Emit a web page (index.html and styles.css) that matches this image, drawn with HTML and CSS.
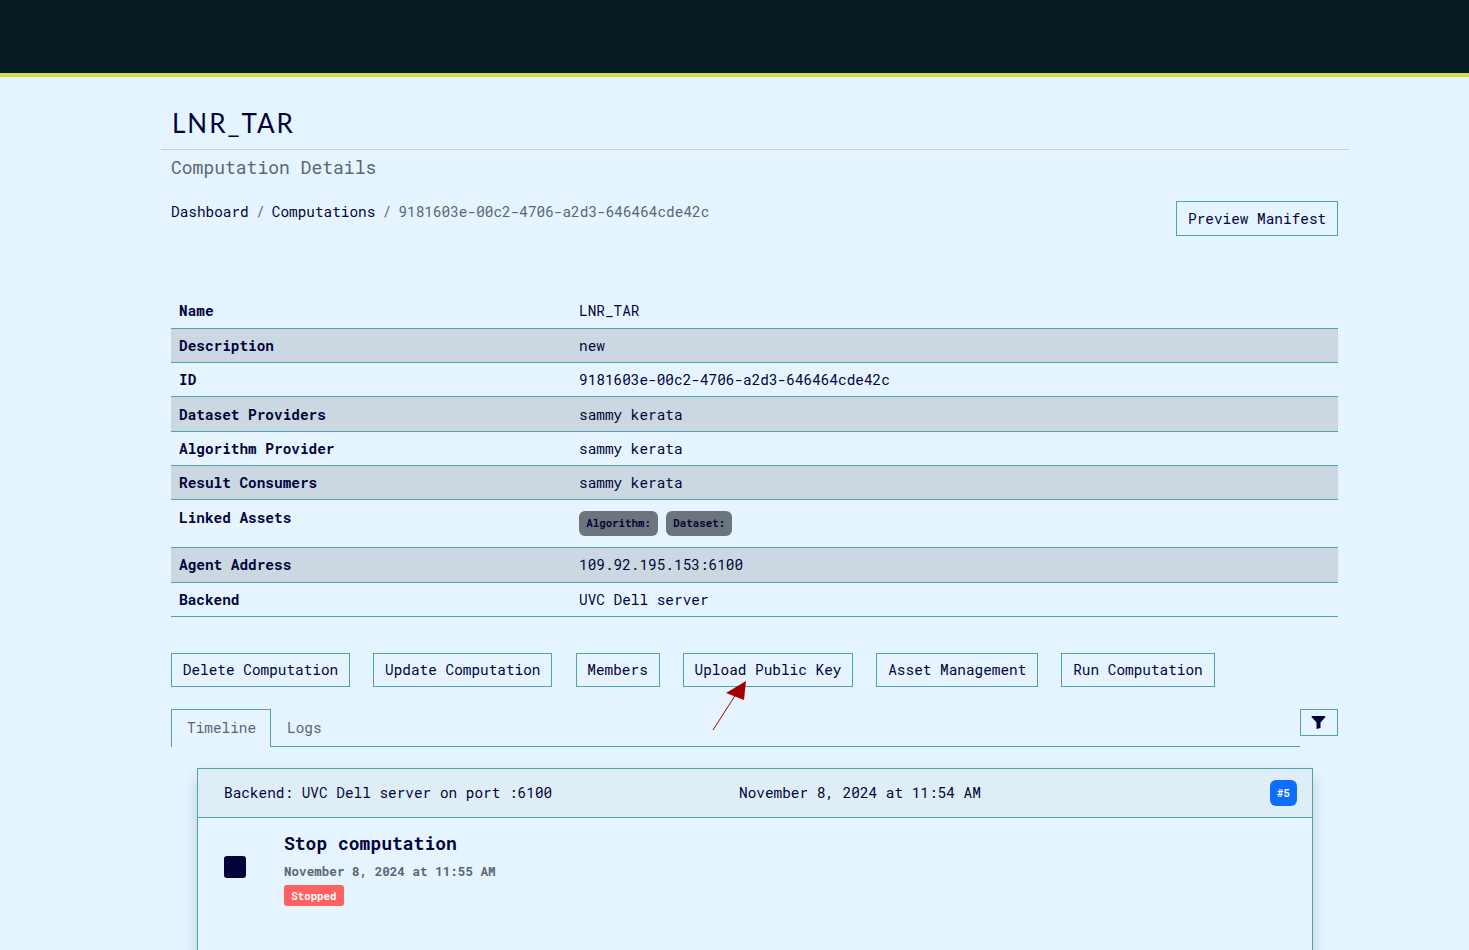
FILE: index.html
```html
<!DOCTYPE html>
<html lang="en">
<head>
<meta charset="utf-8">
<title>LNR_TAR</title>
<link rel="stylesheet" href="styles.css">
</head>
<body>
<header class="topbar"></header>
<main class="page">
  <h1 class="title">LNR_TAR</h1>
  <div class="content">
    <h2 class="subtitle">Computation Details</h2>
    <div class="crumbrow">
      <nav class="crumbs"><a>Dashboard</a><span class="sep">/</span><a>Computations</a><span class="sep">/</span><span class="current">9181603e-00c2-4706-a2d3-646464cde42c</span></nav>
      <button class="btn">Preview Manifest</button>
    </div>
    <table class="details">
      <tr><th>Name</th><td>LNR_TAR</td></tr>
      <tr><th>Description</th><td>new</td></tr>
      <tr><th>ID</th><td>9181603e-00c2-4706-a2d3-646464cde42c</td></tr>
      <tr class="tall low"><th>Dataset Providers</th><td>sammy kerata</td></tr>
      <tr><th>Algorithm Provider</th><td>sammy kerata</td></tr>
      <tr><th>Result Consumers</th><td>sammy kerata</td></tr>
      <tr class="assets"><th>Linked Assets</th><td><span class="chip">Algorithm:</span><span class="chip">Dataset:</span></td></tr>
      <tr class="tall"><th>Agent Address</th><td>109.92.195.153:6100</td></tr>
      <tr><th>Backend</th><td>UVC Dell server</td></tr>
    </table>
    <div class="actions">
      <button class="btn">Delete Computation</button>
      <button class="btn">Update Computation</button>
      <button class="btn">Members</button>
      <button class="btn">Upload Public Key</button>
      <button class="btn">Asset Management</button>
      <button class="btn">Run Computation</button>
      <svg class="arrow" width="50" height="54" viewBox="0 0 50 54"><path d="M2 51 L27 12" stroke="#a50000" stroke-width="1" fill="none"/><path d="M35 2 L15 14 L33 21 Z" fill="#a50000"/></svg>
    </div>
    <div class="tabrow">
      <div class="tabs"><a class="tab active">Timeline</a><a class="tab">Logs</a></div>
      <button class="btn filter"><svg width="15" height="13" viewBox="0 0 15 13"><path d="M0.5 1 Q0.5 0 1.5 0 H13.5 Q14.5 0 14.5 1 L9.5 6.5 V12 L5.5 13 V6.5 Z" fill="#03033a"/></svg></button>
    </div>
    <section class="card">
      <div class="cardhead">
        <span class="backend">Backend: UVC Dell server on port :6100</span>
        <span class="date">November 8, 2024 at 11:54 AM</span>
        <span class="num">#5</span>
      </div>
      <div class="event">
        <span class="stopicon"></span>
        <div class="eventtext">
          <h3 class="eventtitle">Stop computation</h3>
          <div class="eventdate">November 8, 2024 at 11:55 AM</div>
          <span class="status">Stopped</span>
        </div>
      </div>
    </section>
  </div>
</main>
</body>
</html>
```
FILE: styles.css
```css
html, body { margin: 0; padding: 0; height: 950px; overflow: hidden; }
body { background: #e5f4ff; color: #03033a; font-family: "Roboto Mono", "Liberation Mono", monospace; font-size: 14.4px; }
.topbar { height: 73px; background: #061c22; border-bottom: 4px solid #cde03c; }
.page { width: 1188px; margin-left: 161px; }
.title { margin: 0; padding: 30px 10px 9px 11px; height: 33px; line-height: 33px; font-family: Lato, sans-serif; font-size: 26px; letter-spacing: 2px; font-weight: 400; border-bottom: 1px solid #c9ced3; }
.content { padding: 0 11px 0 10px; }
.subtitle { margin: 0; padding-top: 5px; height: 24px; line-height: 24px; font-size: 18px; font-weight: 400; color: #5d6670; }
.crumbrow { display: flex; justify-content: space-between; align-items: flex-start; padding-top: 22px; height: 93px; }
.crumbs { line-height: 22px; }
.sep { color: #5d6670; margin: 0 7.2px; }
.current { color: #5d6670; }
.btn { font: inherit; color: #03033a; background: transparent; border: 1px solid #4fa3ad; border-radius: 0; padding: 0 10.8px; height: 35px; white-space: nowrap; }
.details { width: 1167px; border-collapse: collapse; table-layout: fixed; }
.details tr { border-bottom: 1px solid #4fa3ad; height: 34px; }
.details tr.tall { height: 35px; }
.details tr.low th, .details tr.low td { padding-top: 1px; }
.details tr.assets { height: 48px; }
.details tr:nth-child(even) { background: #cbd8e1; }
.details th { width: 384px; padding: 0 8px; text-align: left; font-weight: 700; vertical-align: middle; }
.details td { padding: 0 8px; vertical-align: middle; }
.details tr.assets th { vertical-align: top; padding-top: 8px; }
.chip { display: inline-block; background: #6c757d; color: #03033a; font-size: 10.8px; font-weight: 700; line-height: 25px; height: 25px; padding: 0 7.2px; border-radius: 6px; margin-right: 8px; vertical-align: middle; }
.actions { display: flex; gap: 23.23px; margin-top: 36px; position: relative; }
.actions .btn { height: 34px; padding-bottom: 1px; }
.arrow { position: absolute; left: 540px; top: 26px; }
.tabrow { display: flex; align-items: flex-start; margin-top: 22px; }
.tabs { flex: 1; display: flex; height: 37px; border-bottom: 1px solid #4fa3ad; }
.tab { padding: 0 15px; line-height: 35px; color: #5d6670; height: 38px; box-sizing: border-box; border: 1px solid transparent; border-bottom: 0; }
.tab.active { background: #e5f4ff; border-color: #4fa3ad; width: 100px; }
.btn.filter { width: 38px; height: 27px; padding: 0 2px 0 0; display: flex; align-items: center; justify-content: center; }
.card { margin: 21px 25px 0 26px; border: 1px solid #4fa3ad; height: 300px; box-shadow: 0 8px 16px rgba(0, 0, 0, 0.15); }
.cardhead { display: flex; align-items: center; height: 48px; padding: 0 15px 0 26px; background: #dfeef6; border-bottom: 1px solid #4fa3ad; }
.backend { width: 515px; margin-bottom: 1px; }
.date { flex: 1; margin-bottom: 1px; }
.num { background: #0d6efd; color: #fff; font-size: 10.8px; font-weight: 700; width: 27px; height: 26px; line-height: 26px; text-align: center; border-radius: 6px; }
.event { display: flex; align-items: flex-start; padding: 13px 26px; }
.stopicon { width: 22px; height: 22px; background: #03033a; border-radius: 3px; margin-top: 25px; margin-right: 38px; }
.eventtitle { margin: 0; font-size: 18px; line-height: 24px; font-weight: 700; }
.eventdate { margin-top: 8px; font-size: 12.6px; line-height: 16px; font-weight: 700; color: #5d6670; }
.status { display: inline-block; margin-top: 6px; background: #ff6161; color: #fff; font-size: 10.8px; font-weight: 700; line-height: 22px; height: 21px; padding: 0 7.2px; border-radius: 3px; }
```
